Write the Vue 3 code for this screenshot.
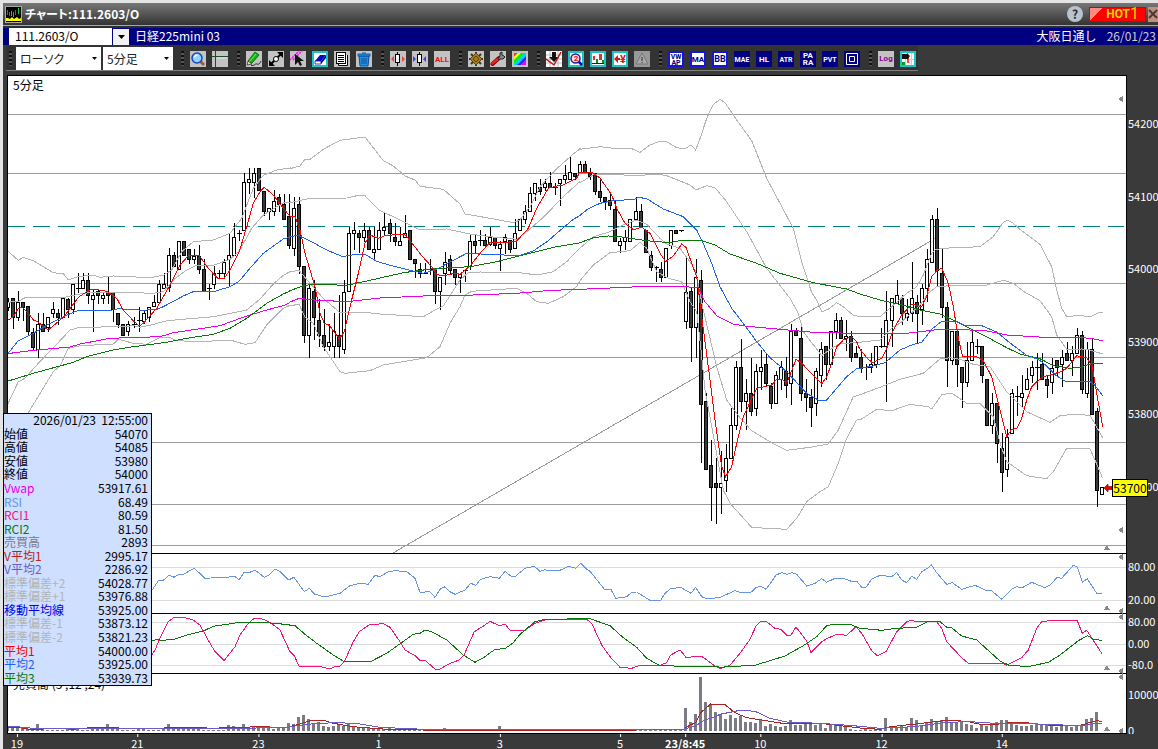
<script setup>
import { ref } from 'vue'

const symbol = ref('111.2603/O')
const style = ref('ローソク')
const period = ref('5分足')

// ツールバーのアイコン（16x16）
const bg = '<rect width="16" height="16" fill="#c3c3c3"/>'
const cyan = '<rect x="1" y="1" width="14" height="14" fill="#fff" stroke="#1cc5c9" stroke-width="2"/>'
const blueBox = '<rect x="1" y="1" width="14" height="14" fill="#fff" stroke="#1414e0" stroke-width="2"/>'
const navy = '<rect width="16" height="16" fill="#000080"/>'
const label = (text, fill, y = 11, size = 8) =>
  `<text x="8" y="${y}" text-anchor="middle" font-size="${size}" fill="${fill}">${text}</text>`

const groups = [
  [
    { name: '拡大', svg: bg + '<path d="M10 10l4 4" stroke="#a85a20" stroke-width="3"/><circle cx="7" cy="7" r="5" fill="#8fd4ff" stroke="#1743c8" stroke-width="1.5"/><path d="M4.500 6.500a3 3 0 0 1 3-2.500" stroke="#fff" fill="none" stroke-width="1.500"/>' },
    { name: '十字線', svg: bg + '<path d="M0 5.500h16M3.500 0v16" stroke="#1d4d25"/><path d="M5 7h10" stroke="#e4e4e4"/>' },
  ],
  [
    { name: '線を描く', svg: bg + '<path d="M2 10L9 1l4 3-7 8z" fill="#12b512" stroke="#087808"/><path d="M10 3l-7 8" stroke="#7be57b"/><path d="M2 10l-1 4 5-1z" fill="#f3d9a0" stroke="#222" stroke-width=".7"/><path d="M5 14c3 2 4-2 6-1s3-1 4-3" stroke="#222" fill="none"/>' },
    { name: '線の移動', svg: bg + '<path d="M3 13L13 3" stroke="#000" stroke-width="2"/><path d="M9 1h6v6zM1 9v6h6z" fill="#000"/><circle cx="8" cy="8" r="2.500" fill="#fff" stroke="#000"/>' },
    { name: '線の選択', svg: bg + '<path d="M0 9L9 0M3 9l9-9" stroke="#f0f" stroke-width="1.500" stroke-dasharray="2 1"/><path d="M5 3v11l3-3 2 4 2-1-2-4h4z" fill="#111"/>' },
    { name: '消しゴム', svg: cyan + '<path d="M3 10l5-6h6l-5 6z" fill="#0808c8"/><path d="M3 10h6v3H3z" fill="#fff" stroke="#0808c8" stroke-width=".8"/><path d="M9 10l5-6v3l-5 6z" fill="#0606a0"/>' },
    { name: 'コピー', svg: bg + '<path d="M4.500 4v10.500h9V4" fill="#fff" stroke="#000"/><rect x="2.500" y="1.500" width="9" height="11" fill="#fff" stroke="#000"/><path d="M4 4.500h6M4 6.500h6M4 8.500h6M4 10.500h6" stroke="#000"/>' },
    { name: '削除', svg: bg + '<path d="M3 5h10l-1 10H4z" fill="#2191e8" stroke="#0b4f92"/><rect x="2" y="3" width="12" height="2" fill="#2191e8" stroke="#0b4f92" stroke-width=".8"/><path d="M6 2h4M6 7v6M8 7v6M10 7v6" stroke="#0b4f92"/>' },
  ],
  [
    { name: '間隔を広げる', svg: bg + '<path d="M7.500 1v14" stroke="#000"/><rect x="5.500" y="3.500" width="4" height="8" fill="#fff" stroke="#000"/><path d="M4 5v6L1 8zM12 5v6l3-3z" fill="#f04040"/>' },
    { name: '間隔を狭める', svg: bg + '<path d="M7.500 1v14" stroke="#000"/><rect x="5.500" y="3.500" width="4" height="8" fill="#fff" stroke="#000"/><path d="M1 5v6l3-3zM14 5v6l-3-3z" fill="#4040f0"/>' },
    { name: '全表示', svg: bg + label('ALL', '#f01010', 11, 8) },
  ],
  [
    { name: '設定', svg: bg + '<path d="M8 1v14M1 8h14M3 3l10 10M13 3L3 13" stroke="#3f3424" stroke-width="2"/><path d="M8 2l6 6-6 6-6-6z" fill="#a77a20" stroke="#5c420c"/><path d="M8 5l3 3-3 3-3-3z" fill="none" stroke="#5c420c"/>' },
    { name: '詳細設定', svg: bg + '<path d="M2.500 13L9 7" stroke="#700" stroke-width="4" stroke-linecap="round"/><path d="M2.500 12.500L8 8" stroke="#f02020" stroke-width="2.500" stroke-linecap="round"/><path d="M8 8l2-3V2l2-1v3l2 1 1 1-2 2h-3l-2 1" fill="#888" stroke="#222"/>' },
    { name: '色設定', svg: bg + '<path d="M2 2h4L2 6z" fill="#f33"/><path d="M6 2h3L2 9V6z" fill="#ff0"/><path d="M9 2h4L2 13V9z" fill="#0e0"/><path d="M13 2h1v3l-9 9H2v-1z" fill="#0cf"/><path d="M14 5v4l-5 5H5z" fill="#22f"/><path d="M14 9v5H9z" fill="#e0f"/>' },
  ],
  [
    { name: '売買', svg: '<rect width="16" height="16" fill="#fff"/><path d="M0 4h16M0 8h16M0 12h16M4 0v16M12 0v16" stroke="#bbb"/><path d="M6 1h4v5h3l-5 5-5-5h3z" fill="#111"/><path d="M0 8l8 6 7-13" fill="none" stroke="#c01818" stroke-width="1.500"/>' },
    { name: '検索', svg: cyan + '<path d="M10 10l4 4" stroke="#11119a" stroke-width="2.500"/><circle cx="7.500" cy="7.500" r="4.500" fill="#ffdede" stroke="#1c1cae" stroke-width="1.500"/>' + label('2', '#e01010', 10, 8) },
    { name: '比較', svg: cyan + '<path d="M2 12.500h12" stroke="#222"/><path d="M3 5h2v4H3zM9 3h3v6H9z" fill="#e03030"/><path d="M6 8h2v4H6zM12 9h2v3h-2z" fill="#118811"/>' },
    { name: '円換算', svg: cyan + '<path d="M2 8l4-4v3h2v2H6v3z" fill="#d01818"/><text x="11" y="12" text-anchor="middle" font-size="11" fill="#d01818">¥</text>' },
    { name: '警告', svg: '<rect width="16" height="16" fill="#999"/><path d="M8 2l6 11H2z" fill="#aaa" stroke="#777"/><path d="M8 6v4M8 11v1" stroke="#555" stroke-width="1.500"/>' },
  ],
  [
    { name: 'VWAP', svg: blueBox + label('VW', '#000080', 8, 7) + label('AP', '#000080', 14, 7) },
    { name: 'MA', svg: blueBox + label('MA', '#000080', 11, 8) },
    { name: 'BB', svg: blueBox + label('BB', '#000080', 11, 9) },
    { name: 'MAE', svg: navy + label('MAE', '#fff', 11, 7) },
    { name: 'HL', svg: navy + label('HL', '#fff', 11, 8) },
    { name: 'ATR', svg: navy + label('ATR', '#fff', 11, 7) },
    { name: 'PARA', svg: navy + label('PA', '#fff', 7, 8) + label('RA', '#fff', 14, 8) },
    { name: 'PVT', svg: navy + label('PVT', '#fff', 11, 7) },
    { name: '枠', svg: navy + '<path d="M2.500 2.500h11v11h-11zM5.500 5.500h5v5h-5z" fill="none" stroke="#fff"/>' },
  ],
  [
    { name: '対数', svg: bg + label('Log', '#900090', 10, 8) },
    { name: '分割', svg: cyan + '<path d="M8 8.500h6M11.500 2v12M5.500 8v6" stroke="#ccc"/><rect x="7" y="4" width="2" height="8" fill="#f44"/><path d="M2 3h5V2l3 3-3 4V8H2z" fill="#111"/><rect x="2" y="11" width="3" height="3" fill="#119911"/>' },
  ],
]

// カーソル位置の値
const info = [
  ['始値', '54070', 'black'],
  ['高値', '54085', 'black'],
  ['安値', '53980', 'black'],
  ['終値', '54000', 'black'],
  ['Vwap', '53917.61', 'magenta'],
  ['RSI', '68.49', 'sky'],
  ['RCI1', '80.59', 'pink'],
  ['RCI2', '81.50', 'green'],
  ['売買高', '2893', 'gray'],
  ['V平均1', '2995.17', 'brown'],
  ['V平均2', '2286.92', 'violet'],
  ['標準偏差+2', '54028.77', 'silver'],
  ['標準偏差+1', '53976.88', 'silver'],
  ['移動平均線', '53925.00', 'navy'],
  ['標準偏差-1', '53873.12', 'silver'],
  ['標準偏差-2', '53821.23', 'silver'],
  ['平均1', '54000.00', 'red'],
  ['平均2', '53925.00', 'blue'],
  ['平均3', '53939.73', 'green'],
]

// チャートの元データは1/3ピクセル単位
const candleX = (i) => Math.floor(8.5 + i * 5.02)
const py = (v) => Math.round(90 + v / 3)

// w: 陽線 / f: 陰線 = 高値,上,下,安値   d: 同値 = 高値,値,安値
const candleData = `
w625,635,650,660 f625,625,682,713 w603,636,682,690 f636,636,650,690 f649,649,724,735 f715,726,770,780
w670,703,778,800 f670,703,724,724 w682,682,712,724 w636,658,670,682 f658,670,682,703 w625,625,680,680
f625,628,658,682 w583,583,658,670 d550,595,606 w550,571,595,595 f550,571,616,638 w600,614,626,724
f600,603,616,638 w605,616,625,638 f562,605,616,638 f605,605,658,692 f670,670,702,712 f703,703,736,736
w692,703,724,736 d682,703,712 d650,691,724 w660,670,692,700 w650,650,682,692 w616,637,648,648
w571,583,637,637 w550,583,595,595 w474,496,592,604 f485,496,528,528 w452,452,538,538 f452,452,496,496
f476,476,508,520 w476,497,508,520 f464,497,538,550 f508,538,604,604 d583,595,626 w528,550,583,595
d540,550,565 w508,517,550,562 w432,496,508,584 w400,442,496,496 d420,430,450 w248,277,420,420
w235,268,277,310 w235,248,277,322 f235,235,300,300 f302,302,364,376 w355,355,364,386 w300,333,364,376
f312,322,342,364 f312,342,388,388 f312,378,464,474 w322,355,474,496 f322,343,528,550 f528,528,736,757
w583,595,736,800 f571,604,682,747 f628,691,736,768 f658,736,768,780 w703,757,768,780 w670,724,768,800
f616,736,768,800 w571,605,778,790 w410,430,604,604 w396,421,430,476 f420,430,442,485 w398,421,442,453
f410,421,476,476 w410,476,485,508 w396,421,476,476 w367,410,421,432 f387,398,430,453 f400,441,452,464
w410,452,464,464 w376,430,442,442 f421,421,508,508 f508,508,518,560 f518,538,550,560 d520,548,550
d508,538,552 f538,538,604,638 w562,562,604,656 w486,517,550,583 f496,508,540,550 f538,538,562,583
w551,551,562,605 d538,540,573 w432,452,528,538 f436,452,464,485 d420,450,464 f432,450,464,464
w412,442,462,464 f442,442,464,474 w453,462,475,540 w432,442,454,490 f450,450,476,485 w388,430,475,475
w388,388,421,421 w346,364,388,398 w290,310,364,364 w278,278,310,330 f267,290,302,312 w267,278,290,300
f246,278,290,290 d280,290,312 w268,268,278,344 w225,256,268,278 w202,246,268,268 f248,248,257,268
w214,223,246,246 f214,223,246,246 f234,248,257,268 f248,248,302,312 f268,302,322,334 f322,322,333,356
f310,331,344,356 f334,356,452,452 w443,452,464,486 w420,442,452,476 w388,388,452,452 w322,364,388,388
f343,364,412,412 f420,420,485,485 f484,496,530,540 d528,530,573 f517,538,562,573 w475,475,562,562
w421,421,464,474 f421,421,430,430 d420,421,423 w497,605,692,713 f593,604,712,812 w506,560,712,800
f540,571,941,1116 f908,932,1138,1138 f1050,1126,1192,1290 f1104,1180,1192,1300 w1083,1180,1192,1268 w1062,1104,1170,1202
w953,1006,1105,1105 w812,832,1006,1017 f747,832,932,963 w867,910,932,1017 f803,910,964,975 w822,844,953,974
w780,832,844,898 f790,822,878,888 f878,888,940,953 w844,856,940,940 w814,832,866,898 f802,844,886,920
w702,724,878,942 f714,724,736,736 f702,745,910,930 f867,910,920,963 f898,920,952,1007 w834,844,940,974
w757,778,856,888 f769,769,822,866 w724,724,822,822 w670,691,724,745 f682,691,745,745 w691,737,745,780
f724,737,800,812 f768,790,800,800 f778,800,834,845 d822,832,866 w790,822,832,845 w769,769,822,832
d714,768,770 w603,691,768,932 w625,625,691,768 w571,616,638,638 f616,625,670,703 w626,670,682,690
w517,625,670,692 f616,637,670,758 w583,595,658,703 w476,508,595,634 w376,388,517,517 f355,388,540,584
f476,550,650,680 f637,650,811,887 w724,724,811,822 f724,724,822,887 f832,832,877,952 w757,811,877,887
w720,757,811,811 d747,769,790 f769,769,856,877 f866,866,1006,1006 w910,940,1006,1028 f940,940,1060,1115
f1030,1073,1147,1202 w1017,1040,1138,1158 w898,910,1028,1028 d888,918,974 w856,910,920,952 w834,866,898,898
w814,832,856,876 d790,832,898 f790,822,866,866 f856,866,886,920 w804,834,877,908 f811,811,832,856
w780,800,822,887 f757,790,811,811 w768,790,811,854 w714,736,790,790 f724,736,898,908 w757,778,910,920
f745,778,973,973 f953,963,1201,1247 w1192,1192,1213,1213`

const candles = candleData.trim().split(/\s+/).map((item, i) => {
  const kind = item[0]
  const v = item.slice(1).split(',').map(Number)
  const [high, top, bottom, low] = kind === 'd' ? [v[0], v[1], v[1], v[2]] : v
  return {
    x: candleX(i),
    kind,
    high: py(high),
    low: Math.max(py(low), py(bottom)),
    top: py(top),
    height: kind === 'd' ? 1 : Math.max(3, py(bottom) - py(top) + 1),
  }
})

// [x原点, y原点, 'x,y x,y ...'] をつなげてpolylineの座標にする
const trace = (...runs) =>
  runs.map(([ox, oy, s]) =>
    s.split(' ').map((p) => {
      const [x, y] = p.split(',').map(Number)
      return `${(ox + x / 3).toFixed(1)},${(oy + y / 3).toFixed(1)}`
    }).join(' ')
  ).join(' ')

const price = (a, b, c, d) => trace([0, 90, a], [290, 90, b], [580, 90, c], [860, 90, d])
const lower = (a, b, c) => trace([0, 405, a], [290, 540, b], [720, 480, c])

const lines = [
  { color: 'band', points: price(
    '22,482 55,511 70,502 100,512 160,548 190,551 205,569 235,560 280,555 300,562 340,558 390,560 450,563 490,556 515,540 545,485 580,455 640,450 690,430 725,385 760,295 790,256 830,240 870,234',
    '0,236 30,228 45,208 60,208 100,178 150,151 180,147 225,141 280,212 310,228 345,258 375,270 390,289 460,298 510,342 525,372 600,385 670,398 690,390 720,350 750,290 800,236 850,192 870,176',
    '0,178 60,170 110,176 155,176 180,187 210,165 240,154 260,155 290,173 315,176 333,165 347,180 362,140 380,85 400,43 420,28 435,38 470,90 515,152 560,265 600,340 640,415 665,515 695,608 710,630 725,665 745,658 770,638 790,650 820,676 840,680',
    '0,680 60,680 90,655 140,610 170,590 190,555 215,490 225,480 245,475 360,470 400,440 430,397 443,391 460,400 480,418 540,463 575,530 590,600 605,655 620,680 660,676 690,681 715,668 728,667') },
  { color: 'band', points: price(
    '22,637 55,634 75,623 190,623 205,619 250,610 290,607 370,607 460,610 490,605 520,570 560,540 590,526 640,526 690,508 718,483 755,415 790,375 850,338 870,336',
    '0,338 50,327 170,324 210,315 225,317 270,362 320,385 390,420 470,417 540,432 600,440 680,448 710,425 760,382 820,320 868,276',
    '0,278 40,255 75,252 170,257 230,252 260,257 330,285 348,300 380,287 405,293 440,335 500,425 560,535 630,625 655,670 670,725 725,797 745,782 780,760 840,758',
    '0,757 60,750 100,710 120,700 180,645 205,610 230,590 300,585 370,588 430,571 460,580 490,604 540,632 575,680 590,735 620,778 665,777 690,780 728,792') },
  { color: 'band', points: price(
    '22,945 55,875 75,865 115,820 180,752 210,720 240,712 370,710 400,707 420,712 450,706 500,692 640,680 740,660 780,627 820,582 850,556 870,545',
    '0,544 28,542 60,580 100,625 150,668 225,667 270,672 400,680 430,663 460,648 510,570 535,548 570,546 690,548 740,555 790,545 830,515 868,476',
    '0,474 40,440 90,425 130,405 170,390 200,403 240,445 260,462 300,475 330,515 347,545 370,660 410,830 440,930 480,983 515,1022 575,1058 620,1081 690,1072 745,1062 775,1020 820,920 840,914',
    '0,914 70,888 120,868 190,850 240,807 270,803 300,808 340,823 390,830 440,905 500,965 570,997 600,977 640,973 690,976 728,1043') },
  { color: 'band', points: price(
    '85,968 160,845 180,828 205,775 240,767 340,762 355,748 400,760 440,763 480,743 510,743 530,752 600,755 690,750 735,763 765,758 800,705 850,655 868,647',
    '0,646 28,644 45,682 70,700 100,770 150,845 165,850 240,842 280,825 370,810 410,803 450,770 480,700 510,650 525,615 545,604 680,595 710,610 740,635 775,640 820,620 860,590 868,576',
    '0,572 40,525 90,488 150,482 180,457 200,475 230,545 265,565 305,575 330,635 350,665 362,770 375,900 395,1010 430,1200 450,1240 515,1312 560,1315 620,1318 650,1285 680,1235 720,1205 745,1190 775,1120 800,1045 830,990 840,988',
    '0,990 50,958 95,962 150,943 205,950 215,957 245,914 275,909 320,940 360,940 400,980 420,1060 440,1115 500,1157 560,1166 580,1145 620,1075 690,1077 705,1110 728,1165') },
  { color: 'magenta', points: price(
    '22,791 90,782 210,771 240,762 330,745 480,740 520,728 660,707 740,678 800,660 850,647 868,638',
    '0,636 25,626 40,626 55,629 170,635 270,624 400,618 550,615 680,610 760,603 868,597',
    '0,598 110,593 200,589 320,590 355,594 375,635 410,677 460,702 500,709 600,718 700,727 820,730 838,730',
    '0,730 140,730 240,718 370,721 440,735 550,742 650,742 690,745 728,752') },
  { color: 'green', points: price(
    '22,874 100,850 220,817 260,800 340,780 400,770 500,757 560,745 640,733 690,715 740,685 800,640 850,612 868,604',
    '0,602 40,587 70,583 170,586 240,571 340,548 430,536 540,530 620,515 720,490 800,470 868,459',
    '0,458 40,443 85,438 120,440 200,452 270,458 305,451 365,452 405,465 450,492 530,520 600,550 700,578 800,597 838,611',
    '0,612 60,630 130,646 180,660 240,672 300,700 370,735 440,773 480,792 540,806 580,827 630,835 660,832 690,822 728,821') },
  { color: 'blue', points: price(
    '22,793 55,752 100,730 145,703 190,680 235,661 340,660 355,656 385,658 430,661 470,658 490,650 550,618 580,605 640,605 690,590 718,573 750,535 790,490 850,447 868,442',
    '0,440 25,436 70,458 110,480 155,499 180,497 190,493 225,493 260,514 300,526 370,543 400,550 440,538 480,516 530,490 555,490 590,494 690,496 730,483 775,452 800,430 850,388 868,378',
    '0,376 25,356 60,340 105,331 160,329 175,322 200,326 250,357 310,380 350,420 365,450 395,520 420,590 455,655 495,707 530,755 570,803 620,845 680,910 715,930 740,930 770,895 800,860 830,836 838,835',
    '0,835 40,828 75,818 120,780 155,765 185,757 215,718 245,694 290,695 315,706 365,707 410,726 455,763 500,796 535,808 560,828 590,858 620,876 650,875 670,876 690,875 705,886 728,917') },
  { color: 'red', points: price(
    '22,692 40,680 55,655 68,653 85,670 100,690 112,695 145,720 190,682 235,622 265,602 280,597 320,604 350,625 370,660 400,692 418,708 430,700 470,655 510,585 540,525 565,497 597,496 625,535 655,567 672,566 690,540 718,485 740,410 760,340 780,305 793,292 820,315 845,348 868,377',
    '0,378 15,380 30,420 45,490 75,590 90,670 103,700 118,706 148,747 163,725 180,650 205,550 225,460 240,435 265,445 285,437 330,433 345,434 365,458 395,497 425,530 440,553 455,558 495,550 510,553 540,528 570,490 600,457 650,457 680,453 715,415 740,355 775,295 795,289 820,285 860,265 868,248',
    '0,247 40,249 60,264 95,315 110,355 135,400 160,419 185,412 210,430 240,490 257,515 280,498 305,462 318,472 335,520 350,560 365,680 385,830 405,990 425,1130 437,1160 455,1130 470,1060 490,980 530,895 545,892 575,885 590,868 605,868 620,878 630,855 648,808 665,820 725,882 740,860 755,820 770,770 790,750 815,740 830,755 838,775',
    '0,778 20,803 37,818 65,805 80,775 100,720 125,675 155,643 185,650 200,620 215,560 232,540 245,535 265,580 280,650 295,745 308,800 350,800 370,812 395,860 420,960 440,1040 455,1018 470,1016 485,985 500,930 515,890 545,862 600,846 620,835 650,797 680,803 697,830 712,920 728,1010') },
  // RSI
  { color: 'sky', points: lower(
    '455,557 475,527 490,526 508,510 522,517 537,508 550,508 583,490 615,520 705,515 718,524 732,502 747,503 765,495 793,517 808,510 825,492 840,500 865,524',
    '0,118 12,112 43,155 58,145 73,162 105,171 150,160 180,137 210,130 235,133 255,106 270,110 295,95 317,92 350,95 375,115 390,157 420,155 435,172 450,148 463,140 480,155 495,163 525,150 542,130 557,136 572,118 600,110 628,115 645,94 662,108 677,108 705,85 733,79 750,94 765,89 780,93 810,91 835,79 857,85 872,70 890,88 900,94 945,150 962,147 977,175 1010,170 1025,157 1040,156 1080,181 1112,181 1125,160 1142,146 1172,142 1203,160 1217,142 1235,170 1250,176 1285,173',
    '0,352 45,332 62,338 93,337 108,323 122,319 138,328 155,305 168,285 185,278 200,283 215,278 230,283 260,318 285,310 305,296 320,307 345,295 370,295 400,306 410,304 425,322 438,322 455,297 480,286 515,290 530,278 545,300 560,308 575,289 590,298 605,275 625,263 634,254 650,278 680,313 697,308 725,328 765,316 800,332 815,333 845,358 875,328 890,320 905,324 935,307 975,323 990,315 1012,292 1025,295 1060,256 1072,261 1087,307 1102,296 1130,340 1146,340') },
  // RCI
  { color: 'pink', points: lower(
    '455,750 465,735 480,700 505,650 522,637 555,638 580,645 600,660 630,715 645,740 672,767 705,725 720,690 745,655 763,640 780,639 810,652 840,675 868,736',
    '0,335 13,347 27,379 90,379 118,387 135,380 150,378 163,365 190,305 208,275 238,254 280,251 300,262 330,305 345,330 375,347 390,361 405,361 435,387 450,387 480,370 508,360 522,345 553,275 585,255 600,244 628,257 645,252 660,271 705,271 735,250 765,240 890,238 905,250 935,315 960,350 990,382 1025,385 1050,376 1110,376 1130,368 1142,345 1170,330 1188,352 1235,349 1275,378 1288,384',
    '0,566 30,556 60,520 90,478 108,438 123,423 138,424 165,445 182,448 200,466 213,466 228,441 260,483 273,518 305,485 320,476 350,463 380,466 408,440 425,460 455,512 472,527 498,515 530,455 560,425 575,421 590,425 650,425 665,445 680,485 725,533 745,550 850,550 860,556 905,533 925,510 950,445 965,425 995,421 1072,422 1087,460 1100,451 1146,521') },
  { color: 'green', points: lower(
    '455,707 470,704 490,706 522,703 560,690 610,678 640,664 720,652 800,653 868,659',
    '0,256 15,257 45,283 80,310 130,345 160,363 245,363 290,340 370,283 390,280 405,270 425,275 470,300 520,345 555,367 585,350 615,328 645,326 670,308 690,283 735,245 765,238 900,236 960,257 1000,293 1040,322 1070,355 1110,377 1288,381',
    '0,562 45,559 105,556 195,528 250,497 290,470 320,437 340,433 395,435 420,445 485,451 530,445 590,442 620,426 660,425 680,442 695,443 725,468 770,480 840,543 870,557 930,559 985,547 1020,525 1075,482 1103,467 1120,478 1146,481') },
  // 売買高の平均
  { color: 'brown', points: lower(
    '22,967 60,968 85,972 130,972 180,970 220,973 260,969 330,967 370,970 450,972 520,967 580,967 640,970 700,967 800,965 840,969 868,966',
    '0,560 30,552 65,541 100,541 130,550 190,560 280,567 400,570 640,570 900,572 1180,568 1200,555 1217,548 1232,518 1262,492 1288,493',
    '0,674 15,674 45,698 80,713 150,724 200,732 300,730 370,738 420,744 480,748 510,740 580,733 630,727 680,721 740,724 780,733 830,733 870,728 920,728 980,735 1080,736 1130,722 1146,724') },
  { color: 'violet', points: lower(
    '22,965 60,966 100,970 400,970 450,972 500,970 640,969 740,970 868,966',
    '0,560 80,550 150,548 210,552 270,562 400,568 640,569 900,570 1180,568 1217,558 1240,542 1280,528',
    '0,703 60,691 105,694 150,715 200,726 300,730 400,737 480,745 580,740 680,727 750,725 840,731 930,731 1080,737 1120,732 1146,730') },
]

const volume = [
  8, 14, 10, 8, 6, 8, 20, 5, 3, 3, 3, 3, 8, 10, 8, 3, 3, 13, 5, 6, 20, 8, 5, 3, 3, 3, 8, 6, 3, 3, 3, 5, 22, 8, 6, 8, 8, 8, 8,
  3, 3, 3, 4, 4, 19, 14, 8, 20, 12, 14, 10, 8, 8, 6, 8, 8, 24, 20, 42, 48, 36, 20, 27, 16, 12, 16, 18, 16, 22, 12, 9, 9, 9,
  9, 8, 5, 8, 3, 5, 6, 5, 5, 5, 3, 5, 5, 5, 8, 5, 4, 4, 4, 4, 4, 3, 4, 4, 4, 15, 5, 4, 4, 3, 3, 3, 4, 3, 4, 3, 3, 4, 4, 4,
  3, 3, 4, 4, 3, 3, 3, 3, 5, 3, 3, 3, 3, 3, 3, 3, 3, 3, 3, 3, 3, 3, 70, 27, 52, 162, 87, 78, 58, 48, 36, 48, 40, 46, 28,
  26, 24, 36, 14, 20, 14, 12, 14, 32, 18, 18, 22, 20, 18, 22, 9, 17, 17, 14, 12, 5, 3, 3, 5, 4, 6, 8, 40, 14, 12, 14, 12,
  40, 32, 18, 28, 35, 30, 34, 43, 24, 28, 30, 20, 17, 9, 18, 16, 18, 28, 32, 32, 22, 18, 16, 14, 18, 20, 19, 18, 14, 12,
  17, 14, 12, 15, 18, 35, 40, 56,
]
const bars = volume.map((v, i) => {
  const height = Math.round(v / 3)
  return { x: candleX(i) - 2, y: 731 - height, height }
})

const priceLines = [114, 173, 283, 357, 442, 504, 545]
const subLines = [567, 600, 622, 644, 665]
const paneLines = [553, 613, 673]
const leftMarks = [99, 530, 557, 611, 617, 671, 677, 731]
const upMarks = [547, 607, 667, 728]

const axisLabels = [
  ['54200', 124], ['54100', 197], ['54000', 269], ['53900', 342], ['53800', 414], ['53700', 487],
  ['80.00', 567], ['20.00', 600], ['80.00', 622], ['0.00', 644], ['-80.0', 665], ['10000', 695], ['0', 731],
]

const times = [
  ['19', 18], ['21', 138], ['23', 259], ['1', 379], ['3', 500], ['5', 620], ['23/8:45', 685], ['10', 760], ['12', 881], ['14', 1001],
]
const timeX = (x) => ((x - 8) / 1118 * 100).toFixed(2) + '%'
</script>

<template>
  <main class="window">
    <header class="title-bar">
      <svg class="app-icon" viewBox="0 0 17 17" aria-hidden="true">
        <rect x=".5" y=".5" width="16" height="16" fill="#000" stroke="#aaa" />
        <path d="M2.500 4v5M4.500 6v4M10.500 4v5" stroke="#f22" />
        <path d="M6.500 5v5M8.500 6v5M13.500 2v6" stroke="#1c4" />
        <path d="M1 15v-3h2l2 1 2-2 2 2 3-2 2 2 2-1v3z" fill="#ff0" />
      </svg>
      <h1>チャート:111.2603/O</h1>
      <button class="help" aria-label="ヘルプ">?</button>
      <button class="hot">HOT<b>1</b></button>
      <button class="close" aria-label="閉じる">
        <svg viewBox="0 0 10 10"><path d="M1 1l8 8M9 1L1 9" stroke="#4a3a35" stroke-width="2" /></svg>
      </button>
    </header>

    <div class="symbol-bar">
      <input v-model="symbol" class="symbol" aria-label="銘柄コード" />
      <button class="drop" aria-label="銘柄一覧">
        <svg viewBox="0 0 7 4"><path d="M0 0h7L3.500 4z" /></svg>
      </button>
      <span class="name">日経225mini 03</span>
      <span class="session">大阪日通し</span>
      <span class="date">26/01/23</span>
    </div>

    <div class="toolbar">
      <i class="grip first"></i>
      <div class="combo wide">
        <select v-model="style" aria-label="チャート種類">
          <option>ローソク</option>
          <option>ライン</option>
        </select>
        <svg viewBox="0 0 5 3"><path d="M0 0h5L2.500 3z" /></svg>
      </div>
      <div class="combo">
        <select v-model="period" aria-label="足種">
          <option>5分足</option>
          <option>日足</option>
        </select>
        <svg viewBox="0 0 5 3"><path d="M0 0h5L2.500 3z" /></svg>
      </div>
      <template v-for="(group, g) in groups" :key="g">
        <i class="grip"></i>
        <button v-for="icon in group" :key="icon.name" class="tool" :aria-label="icon.name">
          <svg viewBox="0 0 16 16" v-html="icon.svg"></svg>
        </button>
      </template>
    </div>

    <section class="chart">
      <div class="plot">
        <svg class="canvas" viewBox="8 76 1118 657" preserveAspectRatio="none">
          <g class="grid">
            <path v-for="y in priceLines" :key="y" :d="`M8 ${y}.5H1126`" />
            <path v-for="y in subLines" :key="y" class="soft" :d="`M8 ${y}.5H1126`" />
          </g>
          <path class="trend" d="M393 553L936 238" />
          <path class="level" d="M8 226.500H1124" />
          <rect v-for="b in bars" :key="b.x" class="bar" :x="b.x" :y="b.y" width="3" :height="b.height" />
          <g v-for="c in candles" :key="c.x">
            <rect class="wick" :x="c.x" :y="c.high" width="1" :height="c.low - c.high + 1" />
            <rect v-if="c.kind === 'd'" class="wick" :x="c.x - 2" :y="c.top" width="5" height="1" />
            <rect v-else class="body" :class="{ hollow: c.kind === 'w' }" :x="c.x - 1.5" :y="c.top + 0.5" width="3" :height="c.height - 1" />
          </g>
          <polyline v-for="(line, i) in lines" :key="i" class="line" :class="line.color" :points="line.points" />
          <path v-for="y in paneLines" :key="y" class="divider" :d="`M8 ${y}.5H1126`" />
          <path v-for="y in leftMarks" :key="y" class="mark" :d="`M1123 ${y - 3}v6l-5-3z`" />
          <path v-for="y in upMarks" :key="y" class="mark" :d="`M1104 ${y + 3}h6l-3-5z`" />
        </svg>
        <span class="caption">5分足</span>
        <span class="caption volume-caption">売買高 (5 ,12 ,24)</span>
      </div>

      <svg class="axis" viewBox="1127 75 31 659">
        <text v-for="([text, y], i) in axisLabels" :key="i" x="1128" :y="y + 4">{{ text }}</text>
      </svg>

      <svg class="time-axis">
        <g v-for="[text, x] in times" :key="x">
          <rect :x="timeX(x)" y="0" width="1" height="3" />
          <text :x="timeX(x)" y="14" :class="{ bold: text.length > 2 }">{{ text }}</text>
        </g>
      </svg>

      <div class="last-price">
        <svg viewBox="0 0 8 8"><path d="M0 4l4-4v2.500h4v3H4V8z" fill="#e00" stroke="#600" stroke-width=".6" /></svg>
        <span>53700</span>
      </div>

      <table class="info">
        <tbody>
          <tr>
            <td colspan="2">2026/01/23&nbsp; 12:55:00</td>
          </tr>
          <tr v-for="[name, value, color] in info" :key="name">
            <th scope="row" :class="color">{{ name }}</th>
            <td>{{ value }}</td>
          </tr>
        </tbody>
      </table>
    </section>
  </main>
</template>

<style>
body {
  margin: 0;
  background: #3a3a3a;
}
</style>

<style scoped>
.window {
  box-sizing: border-box;
  border-top: 3px solid #e4e4e4;
  border-left: 3px solid #e4e4e4;
  background: #3a3a3a;
  color: #fff;
  font-family: "Noto Sans CJK JP", "Noto Sans", sans-serif;
  font-size: 12px;
  line-height: 16px;
  overflow: hidden;
}

button,
input,
select {
  margin: 0;
  padding: 0;
  border: 0;
  border-radius: 0;
  font: inherit;
}

svg {
  display: block;
}

.title-bar {
  display: flex;
  align-items: center;
  height: 22px;
  padding-left: 2px;
  background: linear-gradient(#777, #333);
  border-bottom: 1px solid #f0a020;
}

.app-icon {
  width: 17px;
  height: 17px;
}

h1 {
  margin: 0 auto 0 3px;
  font-size: 12px;
  font-weight: bold;
  font-feature-settings: "palt";
}

.help {
  width: 16px;
  height: 16px;
  margin-right: 6px;
  border-radius: 50%;
  background: #b9c3cc;
  color: #222f3d;
  font-weight: bold;
  line-height: 16px;
}

.hot {
  display: flex;
  justify-content: flex-end;
  align-items: center;
  width: 57px;
  height: 15px;
  padding-right: 6px;
  box-sizing: border-box;
  border: 1px solid #8c2020;
  background: linear-gradient(135deg, #ff8a80 9px, #f00 9px);
  color: #d8d800;
  font-family: Roboto, sans-serif;
  font-weight: bold;
  font-size: 12px;
  white-space: nowrap;
}

.hot b {
  font-size: 16px;
  font-weight: normal;
}

.close {
  width: 10px;
  height: 15px;
  margin-left: 2px;
  background: #c09080;
}

.close svg {
  width: 10px;
  height: 10px;
}

.symbol-bar {
  display: flex;
  align-items: center;
  height: 17px;
  padding: 0 2px 0 6px;
  border-top: 2px solid #2b2b38;
  background: #000080;
}

.symbol {
  width: 97px;
  height: 17px;
  padding-left: 6px;
  padding-bottom: 2px;
  box-sizing: content-box;
  background: #fff;
  color: #000;
}

.symbol {
  box-sizing: border-box;
  width: 103px;
}

.drop {
  display: flex;
  align-items: center;
  justify-content: center;
  width: 16px;
  height: 16px;
  margin-left: 1px;
  background: #f2f2f2;
}

.drop svg {
  width: 7px;
  height: 4px;
}

.name {
  margin-left: 6px;
}

.session {
  margin-left: auto;
}

.date {
  margin-left: 10px;
  color: #ccc;
}

.name,
.session,
.date {
  padding-bottom: 2px;
  line-height: 15px;
}

.toolbar {
  display: flex;
  align-items: center;
  gap: 6px;
  width: 912px;
  height: 23px;
  margin-left: 3px;
  padding-top: 2px;
  border-bottom: 1px solid #808080;
  background: #333;
}

.grip {
  width: 3px;
  height: 15px;
  margin-left: 3px;
  background: repeating-linear-gradient(#111 0 2px, #555 2px 4px);
}

.grip.first {
  margin-right: -2px;
}

.combo {
  display: flex;
  align-items: center;
  width: 70px;
  height: 23px;
  margin-right: -1px;
  background: #fff;
}

.combo.wide {
  width: 85px;
  margin-right: -4px;
}

.combo select {
  flex: 1;
  min-width: 0;
  height: 23px;
  padding-left: 4px;
  appearance: none;
  background: #fff;
  color: #222;
  font-feature-settings: "palt";
}

.combo svg {
  width: 5px;
  height: 3px;
  margin-right: 4px;
}

.tool {
  width: 16px;
  height: 16px;
  margin-top: 1px;
  background: none;
}

.tool svg {
  width: 16px;
  height: 16px;
  font-family: Roboto, sans-serif;
  font-weight: bold;
}

.chart {
  position: relative;
  display: grid;
  grid-template-columns: 1fr 31px;
  grid-template-rows: 659px 15px;
  padding: 4px 0 0 4px;
}

.plot {
  position: relative;
  border: 1px solid #000;
  background: #fff;
}

.canvas {
  width: 100%;
  height: 657px;
  shape-rendering: crispEdges;
}

.grid path {
  stroke: #9c9c9c;
}

.grid .soft {
  stroke: #dcdcdc;
}

.divider {
  stroke: #000;
}

.trend {
  stroke: #999;
}

.level {
  stroke: #008080;
  stroke-dasharray: 17 8;
}

.bar {
  fill: #7b7b84;
}

.wick {
  fill: #000;
}

.body {
  fill: #3a3a3a;
  stroke: #000;
}

.body.hollow {
  fill: #fff;
}

.mark {
  fill: #888;
}

.line {
  fill: none;
  stroke: currentColor;
}

.band { color: #b4b4b4; }
.info .black { color: #000; }
.magenta { color: #e800e8; }
.sky { color: #6495e4; }
.pink { color: #f0147c; }
.green { color: #087808; }
.gray { color: #777780; }
.brown { color: #b22222; }
.violet { color: #6a5acd; }
.silver { color: #b0b4b8; }
.navy { color: #0000e8; }
.red { color: #f00; }
.blue { color: #1e62f0; }

.caption {
  position: absolute;
  top: 1px;
  left: 5px;
  color: #000;
}

.volume-caption {
  top: 600px;
}

.axis {
  width: 31px;
  height: 659px;
  fill: #fff;
  font-size: 11px;
}

.time-axis {
  width: 100%;
  height: 15px;
  fill: #fff;
  font-size: 11px;
  text-anchor: middle;
}

.time-axis .bold {
  font-weight: bold;
}

.last-price {
  position: absolute;
  top: 408px;
  right: 10px;
  display: flex;
  align-items: center;
}

.last-price svg {
  width: 8px;
  height: 8px;
}

.last-price span {
  width: 34px;
  border: 1px solid #000;
  background: #ff0;
  color: #000;
  text-align: center;
}

.info {
  position: absolute;
  top: 342px;
  left: 0;
  box-sizing: border-box;
  width: 149px;
  height: 273px;
  border: 1px solid #000;
  border-collapse: separate;
  border-spacing: 0;
  background: #cfdfff;
  line-height: 11px;
  white-space: nowrap;
}

.info th {
  padding: 0 0 2px;
  font-weight: normal;
  text-align: left;
}

.info td {
  padding: 0 3px 2px 0;
  color: #000;
  text-align: right;
}
</style>
